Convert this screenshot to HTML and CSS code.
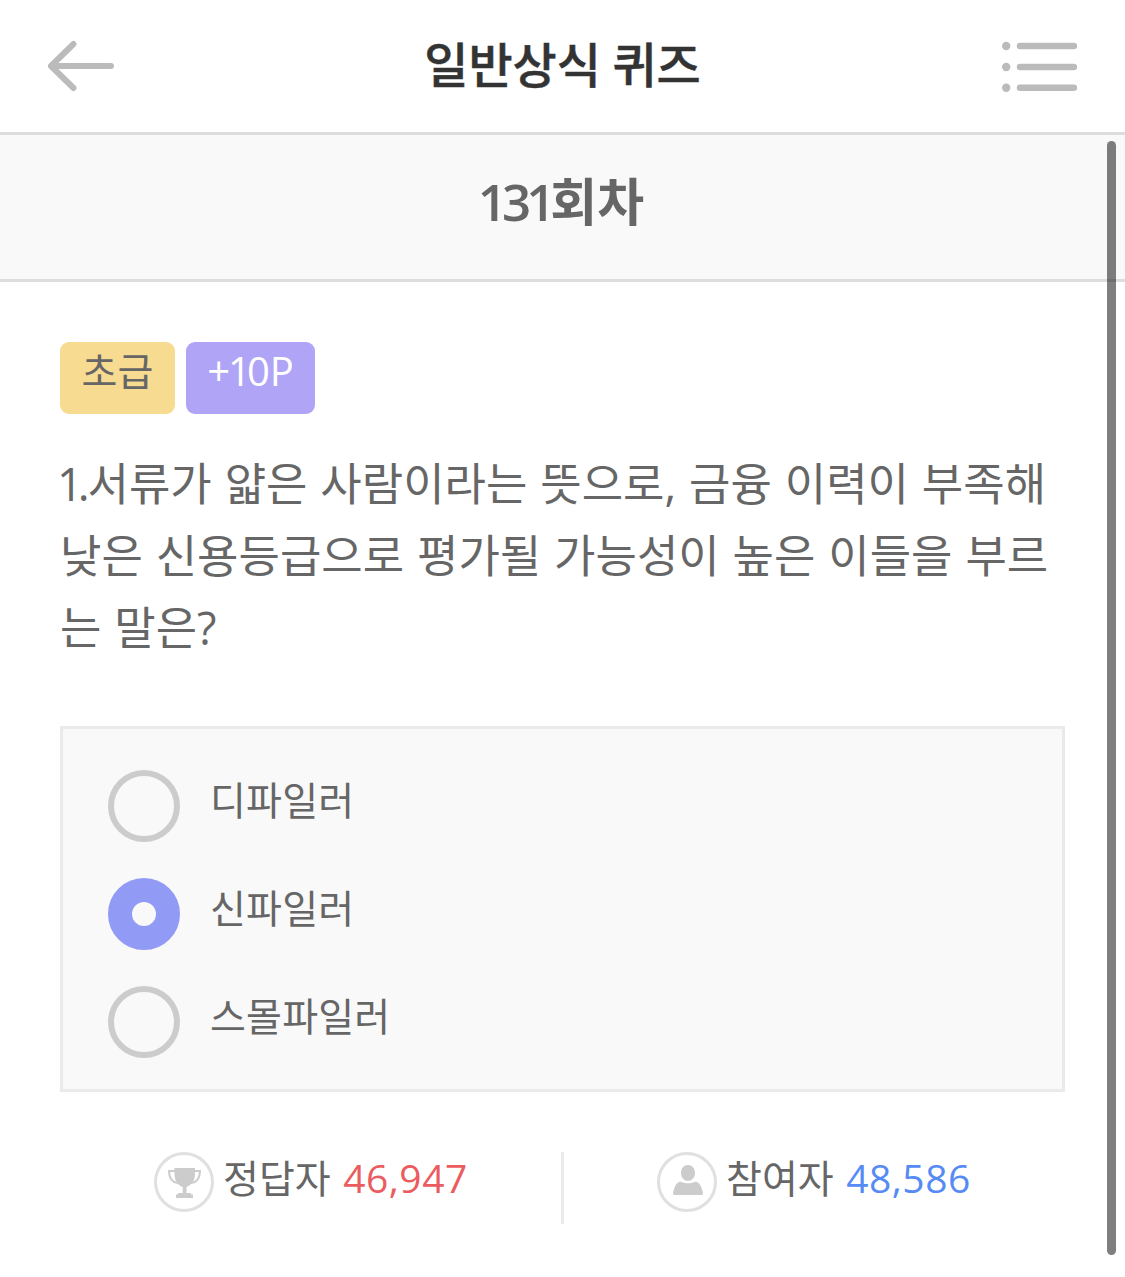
FILE: index.html
```html
<!DOCTYPE html>
<html lang="ko">
<head>
<meta charset="utf-8">
<title>일반상식 퀴즈</title>
<link rel="stylesheet" href="styles.css">
</head>
<body>
<header class="topbar">
  <svg class="icon-back" viewBox="0 0 66 52" width="66" height="52"><path d="M63 26H3M25.500 4L3 26L25.500 48" /></svg>
  <h1 class="title">일반상식 퀴즈</h1>
  <svg class="icon-list" viewBox="0 0 76 52" width="76" height="52">
    <circle cx="5.200" cy="6" r="4.200"/><circle cx="5.200" cy="27" r="4.200"/><circle cx="5.200" cy="47.800" r="4.200"/>
    <path d="M19 6H73M19 27H73M19 47.800H73"/>
  </svg>
</header>
<h2 class="round"><span class="num">131</span>회차</h2>
<main class="quiz">
  <div class="tags">
    <span class="tag level">초급</span>
    <span class="tag point"><span class="plus">+</span><span class="one">1</span><span class="zero">0</span>P</span>
  </div>
  <p class="question"><span class="line l1"><span class="num">1.</span>서류가 얇은 사람이라는 뜻으로<span class="mark">,</span> 금융 이력이 부족해</span><span class="line l2">낮은 신용등급으로 평가될 가능성이 높은 이들을 부르</span><span class="line l3">는 말은<span class="mark">?</span></span></p>
  <ul class="options">
    <li class="option"><span class="radio"></span><span class="label">디파일러</span></li>
    <li class="option"><span class="radio checked"></span><span class="label">신파일러</span></li>
    <li class="option"><span class="radio"></span><span class="label">스몰파일러</span></li>
  </ul>
  <div class="stats">
    <div class="stat">
      <svg class="badge" viewBox="0 0 60 60" width="60" height="60">
        <circle class="ring" cx="30" cy="30" r="28.500"/>
        <path class="fill" d="M20.500 16H41V22C41 29 37 33.500 32.500 35V41H37V42.500H39V46H22V42.500H24V41H28.700V35C24 33.500 20.500 29 20.500 22Z"/>
        <path class="handle" d="M21 19H15C15 26 18 30.300 24 31M40 19H46C46 26 43 30.300 37 31"/>
      </svg>
      <span class="stat-label">정답자</span><span class="count red">46,947</span>
    </div>
    <div class="divider"></div>
    <div class="stat second">
      <svg class="badge" viewBox="0 0 60 60" width="60" height="60">
        <circle class="ring" cx="30" cy="30" r="28.500"/>
        <path class="fill" d="M31 13C35 13 38 16.200 38 20.800C38 25.500 35 29 31 29C27 29 24 25.500 24 20.800C24 16.200 27 13 31 13ZM22.500 29.800C24.500 29.500 26 31.300 31 31.300C36 31.300 37.500 29.500 39.500 29.800C43.500 31 45 37 46 41Q46.500 43 44.500 43H17.500Q15.500 43 16 41C17 37 18.500 31 22.500 29.800Z"/>
      </svg>
      <span class="stat-label">참여자</span><span class="count blue">48,586</span>
    </div>
  </div>
</main>
<div class="scrollbar"></div>
</body>
</html>
```
FILE: styles.css
```css
* { box-sizing: border-box; }
body { margin: 0; height: 1277px; overflow: hidden; background: #fff; color: #666; font-family: "Noto Sans CJK KR", sans-serif; }
h1, h2, p, ul { margin: 0; padding: 0; }
ul { list-style: none; }
svg { display: block; flex: none; }
.topbar { height: 135px; border-bottom: 3px solid #ddd; display: flex; justify-content: space-between; align-items: flex-start; padding: 0 48px; }
.icon-back { margin-top: 40px; fill: none; stroke: #bbb; stroke-width: 6; stroke-linecap: round; stroke-linejoin: round; }
.icon-list { margin-top: 40px; fill: #bbb; stroke: none; }
.icon-list path { stroke: #bbb; stroke-width: 6.500; stroke-linecap: round; }
.title { font-size: 48px; line-height: 125px; font-weight: 500; color: #333; margin-left: 10px; word-spacing: -2px; -webkit-text-stroke: 0.5px #333; }
.round { height: 147px; border-bottom: 3px solid #ddd; background: #f9f9f9; text-align: center; font-size: 51px; line-height: 128px; font-weight: 700; }
.num, .mark, .point, .count { font-family: "Open Sans", sans-serif; }
.num, .mark { line-height: 0; }
.round .num { font-size: 51px; letter-spacing: -5px; font-weight: 600; margin-left: -3px; margin-right: 0; }
.quiz { padding: 60px 60px 0; }
.tags { display: flex; gap: 11px; }
.tag { height: 72px; border-radius: 9px; font-size: 39px; line-height: 54px; text-align: center; white-space: nowrap; }
.level { width: 115px; background: #f7db91; }
.point { width: 129px; background: #b0a4f6; color: #fff; line-height: 58px; font-size: 40px; font-weight: 400; }
.plus { letter-spacing: -2px; }
.one { letter-spacing: -4px; }
.zero { letter-spacing: 0; }
.question { margin-top: 32px; font-size: 45px; line-height: 72px; }
.line { display: block; white-space: nowrap; word-spacing: 0.3px; }
.question .num { letter-spacing: -5px; margin-left: -3px; margin-right: 3px; }
.options { margin-top: 64px; height: 366px; border: 3px solid #eaeaea; background: #f9f9f9; padding: 41px 45px; display: flex; flex-direction: column; gap: 36px; }
.option { display: flex; height: 72px; gap: 30px; }
.radio { width: 72px; height: 72px; border: 6px solid #ccc; border-radius: 50%; }
.checked { border: 24px solid #919bf6; }
.label { font-size: 39px; line-height: 57px; letter-spacing: 0.2px; }
.stats { display: flex; margin-top: 60px; padding-left: 94px; }
.stat { display: flex; width: 407px; font-size: 39px; line-height: 48px; white-space: nowrap; }
.stat-label { margin-left: 9px; }
.count { margin-left: 12.500px; line-height: 52px; font-size: 39px; letter-spacing: 0.5px; }
.red { color: #eb5c60; }
.blue { color: #568af5; }
.divider { width: 3px; height: 72px; background: #eaeaea; }
.second { margin-left: 93px; }
.ring { fill: #fff; stroke: #e0e0e0; stroke-width: 3; }
.fill { fill: #ccc; }
.handle { fill: none; stroke: #ccc; stroke-width: 2; }
.scrollbar { position: absolute; left: 1107px; top: 141px; width: 9px; height: 1114px; border-radius: 5px; background: rgba(0, 0, 0, 0.5); }
```
